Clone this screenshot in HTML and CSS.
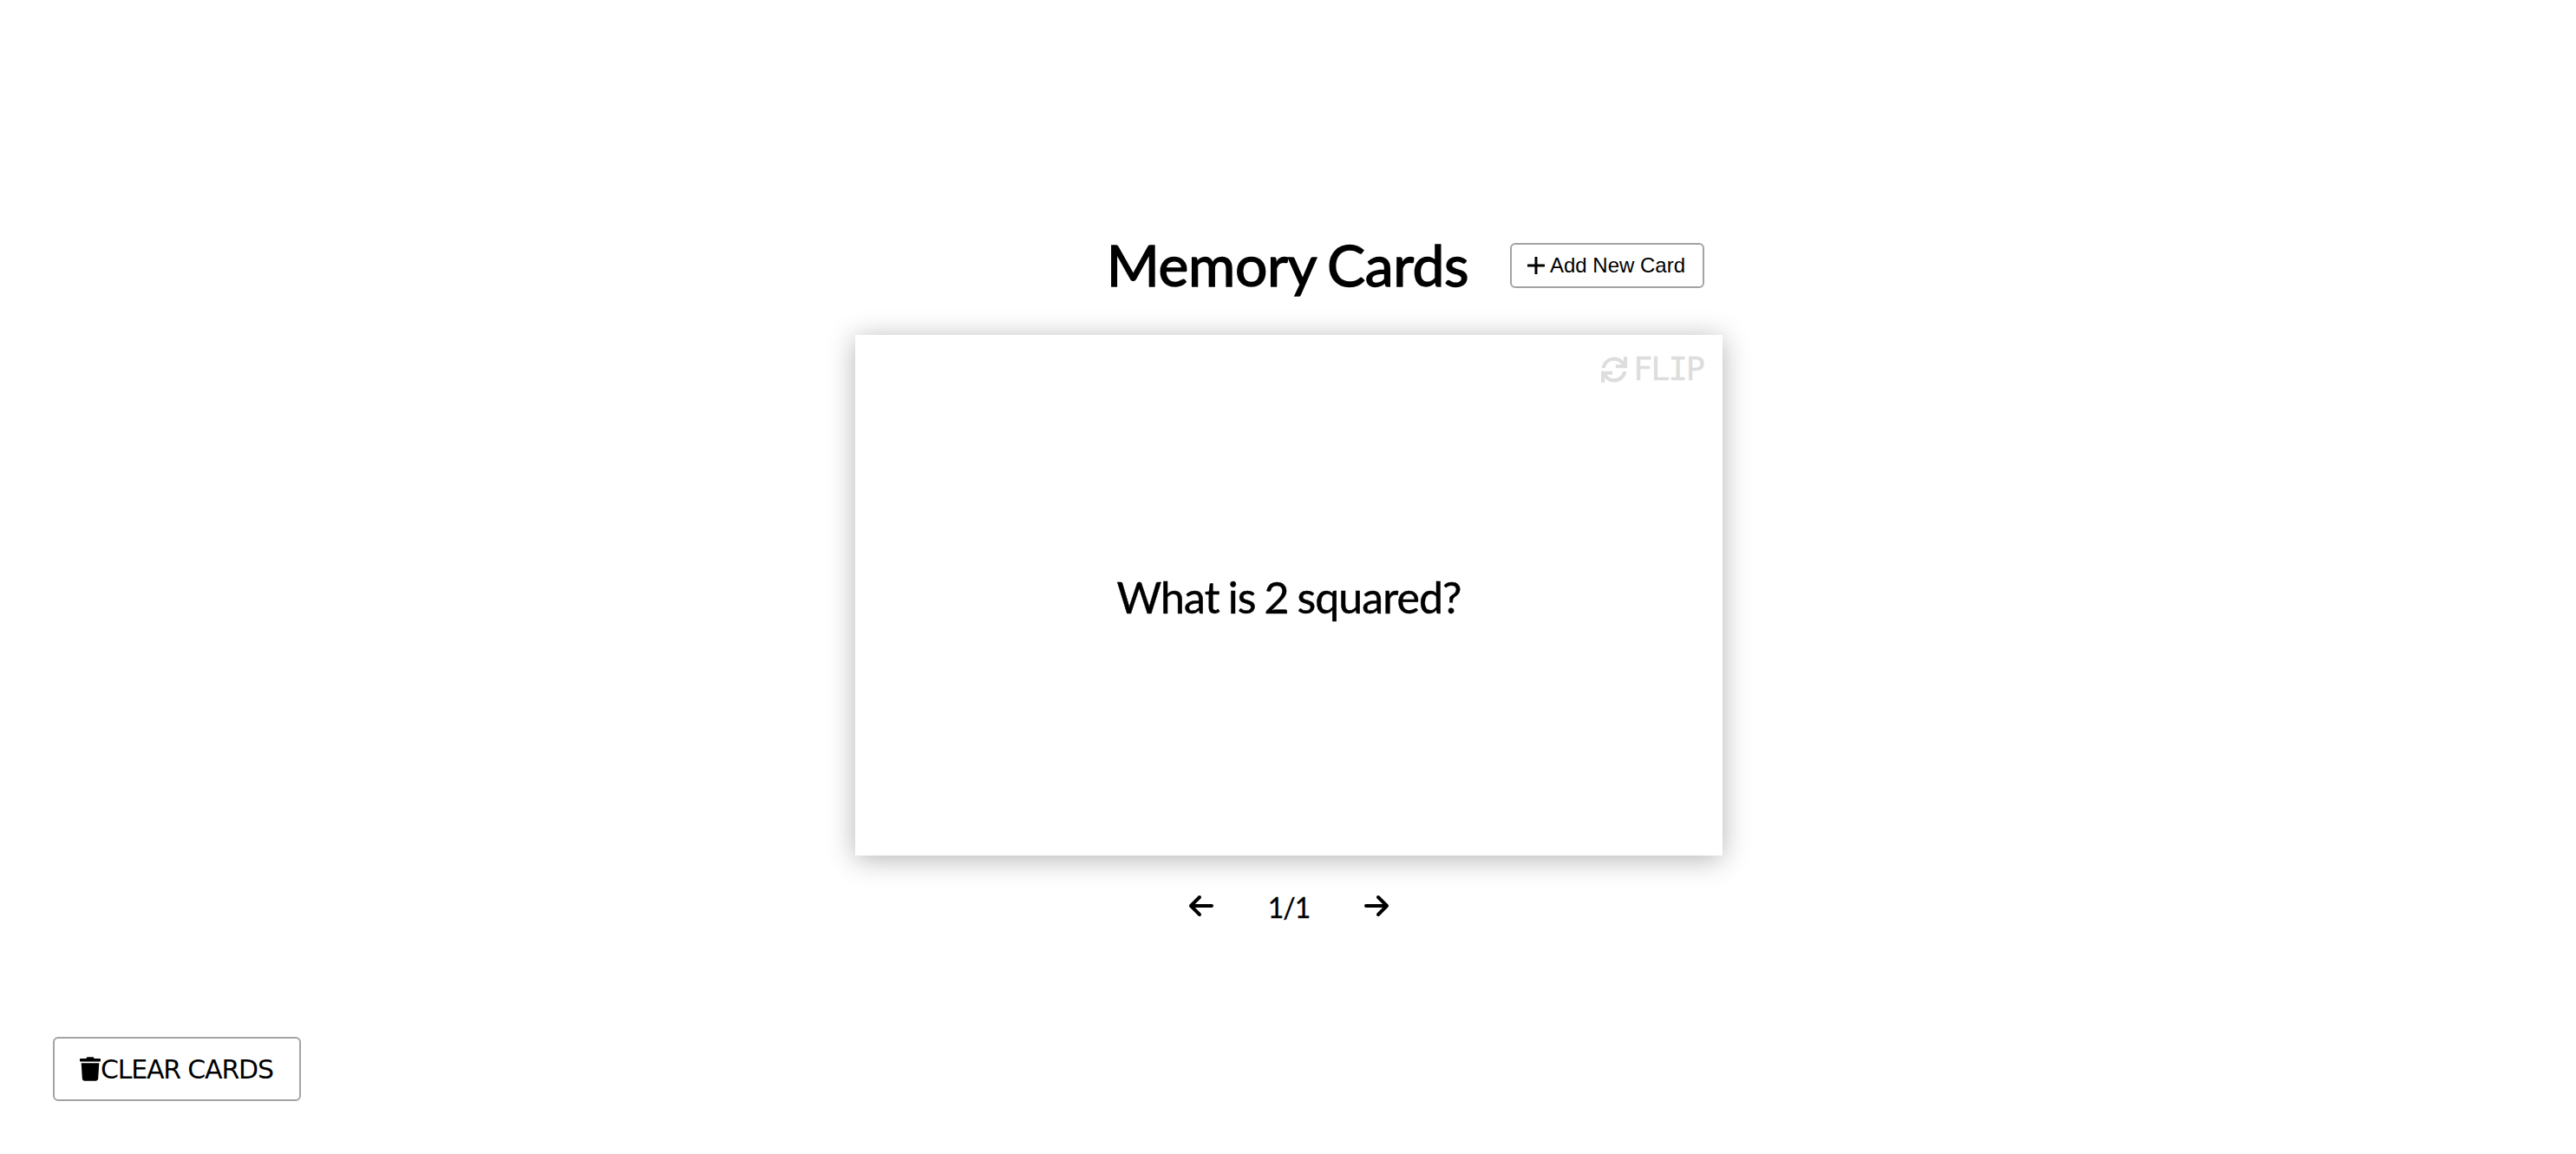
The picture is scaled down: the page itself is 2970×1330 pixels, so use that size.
FILE: index.html
```html
<!DOCTYPE html>
<html lang="en">
<head>
  <meta charset="UTF-8">
  <title>Memory Cards</title>
  <link rel="stylesheet" href="styles.css">
</head>
<body>
  <div class="container">
    <!-- Header -->
    <div class="header">
      <h1>Memory Cards</h1>
      <button class="btn btn-small">
        <svg class="icon-plus" viewBox="0 0 24 24"><path d="M12 2v20M2 12h20"/></svg>
        Add New Card
      </button>
    </div>

    <!-- Card -->
    <div class="card">
      <div class="flip">
        <svg class="icon-sync" viewBox="0 0 512 512"><path d="M440.65 12.57l4 82.77A247.16 247.16 0 0 0 255.83 8C134.73 8 33.91 94.92 12.29 209.82A12 12 0 0 0 24.09 224h49.05a12 12 0 0 0 11.67-9.26 175.91 175.91 0 0 1 317-56.94l-101.46-4.86a12 12 0 0 0-12.57 12v47.41a12 12 0 0 0 12 12H500a12 12 0 0 0 12-12V12a12 12 0 0 0-12-12h-47.37a12 12 0 0 0-11.98 12.57zM255.83 432a175.61 175.61 0 0 1-146-77.8l101.8 4.87a12 12 0 0 0 12.57-12v-47.4a12 12 0 0 0-12-12H12a12 12 0 0 0-12 12V500a12 12 0 0 0 12 12h47.35a12 12 0 0 0 12-12.6l-4.15-82.57A247.17 247.17 0 0 0 255.83 504c121.11 0 221.93-86.92 243.55-201.82a12 12 0 0 0-11.8-14.18h-49.05a12 12 0 0 0-11.67 9.26A175.86 175.86 0 0 1 255.83 432z"/></svg>
        <span>FLIP</span>
      </div>
      <p class="question">What is 2 squared?</p>
    </div>

    <!-- Navigation -->
    <div class="nav">
      <svg class="icon-arrow" viewBox="0 0 30 26"><path d="M27 13H3M13 3L3 13l10 10"/></svg>
      <span class="count">1/1</span>
      <svg class="icon-arrow" viewBox="0 0 30 26"><path d="M3 13h24M17 3l10 10-10 10"/></svg>
    </div>
  </div>

  <button class="btn btn-clear">
    <svg class="icon-trash" viewBox="0 0 448 512"><path d="M432 32H312l-9.4-18.7A24 24 0 0 0 281.1 0H166.8a23.72 23.72 0 0 0-21.4 13.3L136 32H16A16 16 0 0 0 0 48v32a16 16 0 0 0 16 16h416a16 16 0 0 0 16-16V48a16 16 0 0 0-16-16zM53.2 467a48 48 0 0 0 47.9 45h245.8a48 48 0 0 0 47.9-45L416 128H32z"/></svg>
    <span>CLEAR CARDS</span>
  </button>
</body>
</html>
```

FILE: styles.css
```css
body {
  margin: 0;
  padding-left: 2px;
  height: 1330px;
  background: #fff;
  color: #000;
  font-family: Lato, sans-serif;
  overflow: hidden;
}

.container {
  width: 1000px;
  margin: 0 auto;
  padding-top: 262px;
}

.header {
  display: grid;
  grid-template-columns: 1fr auto 1fr;
  align-items: center;
  height: 88px;
  margin-bottom: 36px;
}

h1 {
  grid-column: 2;
  margin: 0;
  padding: 0 3px 3px 0;
  font-size: 66px;
  font-weight: 400;
  letter-spacing: -0.4px;
  word-spacing: -3px;
  -webkit-text-stroke: 1.4px #000;
  white-space: nowrap;
}

.btn {
  display: flex;
  align-items: center;
  background: #fff;
  color: #000;
  border: 2px solid #a3a3a3;
  border-radius: 6px;
  cursor: pointer;
}

.btn-small {
  grid-column: 3;
  justify-self: end;
  gap: 4px;
  height: 52px;
  margin-right: 21px;
  padding: 0 20px 0 16px;
  font-family: "Liberation Sans", Arial, sans-serif;
  font-size: 24px;
}

.icon-plus {
  width: 24px;
  height: 24px;
  fill: none;
  stroke: #000;
  stroke-width: 3;
}

.card {
  position: relative;
  display: flex;
  justify-content: center;
  align-items: center;
  height: 600px;
  background: #fff;
  box-shadow: 0 4px 30px rgba(0, 0, 0, 0.3);
}

.question {
  margin: 0;
  padding-top: 3px;
  font-size: 50px;
  letter-spacing: -0.9px;
  word-spacing: -2px;
  -webkit-text-stroke: 0.5px #000;
}

.flip {
  position: absolute;
  top: 20px;
  right: 22px;
  display: flex;
  align-items: center;
  gap: 7px;
  color: #ddd;
  font-family: "DejaVu Sans Mono", monospace;
  font-size: 37px;
  letter-spacing: -2px;
  line-height: 40px;
  -webkit-text-stroke: 0.3px #ddd;
}

.icon-sync {
  width: 30px;
  height: 30px;
  fill: #ddd;
}

.nav {
  display: flex;
  justify-content: center;
  align-items: center;
  gap: 62px;
  margin-top: 36px;
}

.icon-arrow {
  width: 30px;
  height: 26px;
  fill: none;
  stroke: #000;
  stroke-width: 4;
  stroke-linecap: round;
  stroke-linejoin: round;
}

.count {
  padding-top: 4px;
  font-size: 32px;
  letter-spacing: -1px;
  -webkit-text-stroke: 0.3px #000;
}

.btn-clear {
  position: absolute;
  left: 61px;
  top: 1195px;
  box-sizing: border-box;
  width: 286px;
  height: 74px;
  padding: 0 29px;
  font-family: "DejaVu Sans", sans-serif;
  font-size: 30px;
  letter-spacing: -1.2px;
}

.icon-trash {
  flex: none;
  width: 24px;
  height: 28px;
  fill: #000;
}
```
